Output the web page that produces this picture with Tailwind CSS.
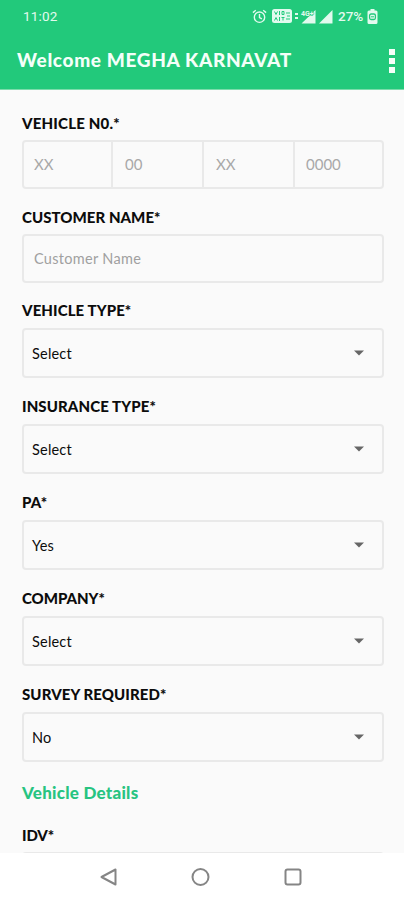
<!DOCTYPE html>
<html lang="en">
<head>
<meta charset="utf-8">
<title>Vehicle form</title>
<script src="https://cdn.jsdelivr.net/npm/@tailwindcss/browser@4"></script>
</head>
<body class="w-[404px] h-[900px] overflow-hidden bg-[#fafafa] font-['Lato',sans-serif] text-[#0c0c0c]">
<div class="flex h-[900px] flex-col">
  <header class="h-[90px] shrink-0 border-b border-[#7bdcab] bg-[#22c97b] text-[#f4fff9]">
    <div class="flex h-8 items-center justify-between pl-[23px] pr-[26px] font-['Roboto',sans-serif] text-[13.500px] text-[#e2faee]">
      <span class="tracking-[0.2px]">11:02</span>
      <div class="flex items-center">
        <svg class="mr-[5px]" width="15" height="15" viewBox="0 0 15 15" fill="none" stroke="currentColor" stroke-width="1.4"><circle cx="7.5" cy="8.2" r="5.2"/><path d="M7.5 5v3.5l2.4 1.4M.9 3.6 3.8 1.2M14.1 3.6l-2.9-2.4"/></svg>
        <svg class="mr-[3px]" width="20" height="14" viewBox="0 0 20 14"><rect width="20" height="14" rx="2.5" fill="currentColor"/><path d="M2.5 2.5 4 5.5l1.5-3M7.5 2v4M10 2.5v3h2v-3zM2.5 11.5 4 8.5l1.5 3M7.5 8v4M9.5 8.5h3M11 8.5v3M14 4h4M15 7h3M14 10h4" fill="none" stroke="#22c97b" stroke-width="1"/></svg>
        <svg class="mr-[3px]" width="21" height="15" viewBox="0 0 21 15" fill="currentColor"><path d="M0 4h3v2H0zM0 8h3v2H0zM20.5 1v13.500H6.500z"/><text x="6" y="6.5" font-family="Roboto" font-size="7" font-weight="700" stroke="#22c97b" stroke-width="1.2" paint-order="stroke">4G+</text></svg>
        <svg class="mr-[5px]" width="14" height="15" viewBox="0 0 14 15" fill="currentColor"><path d="M13.5 1v13.500H0z"/></svg>
        <span class="mr-[3px] w-[26px] whitespace-nowrap font-medium">27%</span>
        <svg width="11" height="15" viewBox="0 0 11 15"><path d="M3.5 0h4v1.5H9q1.5 0 1.5 1.5v10.5q0 1.5-1.5 1.5H2Q.5 15 .5 13.500V3Q.5 1.5 2 1.5h1.5z" fill="currentColor"/><rect x="2.6" y="5" width="5.8" height="5.5" rx="1.5" fill="none" stroke="#22c97b" stroke-width="1.3"/><path d="M4 7.800h3" stroke="#22c97b"/></svg>
      </div>
    </div>
    <div class="flex h-[57px] items-center justify-between pl-[17px] pr-[9px]">
      <h1 class="whitespace-nowrap text-[19px] font-black tracking-[0.65px]">Welcome MEGHA KARNAVAT</h1>
      <div class="flex flex-col gap-[3px]"><i class="size-1.5 bg-current"></i><i class="size-1.5 bg-current"></i><i class="size-1.5 bg-current"></i></div>
    </div>
  </header>

  <main class="flex min-h-0 grow flex-col gap-[19px] overflow-hidden pl-[22px] pr-[20px] pt-[23px] text-[15px]">
    <div class="flex shrink-0 flex-col gap-[7px]">
      <div class="h-5 leading-5 font-black"><span class="tracking-[0.2px]">VEHICLE N0.*</span></div>
      <div class="grid h-[49px] grid-cols-[89px_91px_91px_1fr] divide-x-2 divide-[#e9e9e9] rounded-[4px] border-2 border-[#e9e9e9] text-[#a8a8a8]">
        <div class="flex items-center pl-[10px]"><span>XX</span></div>
        <div class="flex items-center pl-[12px]"><span>00</span></div>
        <div class="flex items-center pl-[12px]"><span>XX</span></div>
        <div class="flex items-center pl-[11px]"><span>0000</span></div>
      </div>
    </div>
    <div class="-mt-px flex shrink-0 flex-col gap-[7px]">
      <div class="h-5 leading-5 font-black"><span class="tracking-[0.05px]">CUSTOMER NAME*</span></div>
      <div class="flex h-[49px] items-center rounded-[4px] border-2 border-[#e9e9e9] pl-[10px] text-[#a0a0a0]"><span class="text-[14.500px] tracking-[0.3px]">Customer Name</span></div>
    </div>
    <div class="-mt-px flex shrink-0 flex-col gap-[7px]">
      <div class="h-5 leading-[19px] font-black"><span class="tracking-[0.1px]">VEHICLE TYPE*</span></div>
      <div class="flex h-[50px] items-center justify-between rounded-[4px] border-2 border-[#e9e9e9] pl-[8px] pr-[18px]"><span class="pt-[2px] text-[14.500px] tracking-[0.2px]">Select</span><svg width="10" height="6" viewBox="0 0 10 6"><path d="M0 .5h10L5 5.500z" fill="#666"/></svg></div>
    </div>
    <div class="flex shrink-0 flex-col gap-[7px]">
      <div class="h-5 leading-[19px] font-black"><span class="tracking-[0.1px]">INSURANCE TYPE*</span></div>
      <div class="flex h-[50px] items-center justify-between rounded-[4px] border-2 border-[#e9e9e9] pl-[8px] pr-[18px]"><span class="pt-[2px] text-[14.500px] tracking-[0.2px]">Select</span><svg width="10" height="6" viewBox="0 0 10 6"><path d="M0 .5h10L5 5.500z" fill="#666"/></svg></div>
    </div>
    <div class="flex shrink-0 flex-col gap-[7px]">
      <div class="h-5 leading-[19px] font-black"><span class="tracking-[0.2px]">PA*</span></div>
      <div class="flex h-[50px] items-center justify-between rounded-[4px] border-2 border-[#e9e9e9] pl-[8px] pr-[18px]"><span class="pt-[2px] text-[14.500px] tracking-[0.2px]">Yes</span><svg width="10" height="6" viewBox="0 0 10 6"><path d="M0 .5h10L5 5.500z" fill="#666"/></svg></div>
    </div>
    <div class="flex shrink-0 flex-col gap-[7px]">
      <div class="h-5 leading-[19px] font-black"><span class="-tracking-[0.05px]">COMPANY*</span></div>
      <div class="flex h-[50px] items-center justify-between rounded-[4px] border-2 border-[#e9e9e9] pl-[8px] pr-[18px]"><span class="pt-[2px] text-[14.500px] tracking-[0.2px]">Select</span><svg width="10" height="6" viewBox="0 0 10 6"><path d="M0 .5h10L5 5.500z" fill="#666"/></svg></div>
    </div>
    <div class="flex shrink-0 flex-col gap-[7px]">
      <div class="h-5 leading-[19px] font-black"><span class="tracking-[0.1px]">SURVEY REQUIRED*</span></div>
      <div class="flex h-[50px] items-center justify-between rounded-[4px] border-2 border-[#e9e9e9] pl-[8px] pr-[18px]"><span class="pt-[2px] text-[14.500px] tracking-[0.2px]">No</span><svg width="10" height="6" viewBox="0 0 10 6"><path d="M0 .5h10L5 5.500z" fill="#666"/></svg></div>
    </div>
    <h2 class="mt-[2px] h-5 shrink-0 text-[17px] leading-5 font-black tracking-[0.25px] text-[#27c481]">Vehicle Details</h2>
    <div class="mt-[3px] flex shrink-0 flex-col gap-[7px]">
      <div class="h-5 leading-5 font-black"><span class="-tracking-[0.1px]">IDV*</span></div>
      <div class="h-[49px] rounded-[4px] border-2 border-[#e9e9e9]"></div>
    </div>
  </main>

  <nav class="flex h-[47px] shrink-0 items-center justify-between bg-white pl-[99px] pr-[102px]">
    <svg width="19" height="20" viewBox="0 0 19 20" fill="none" stroke="#858585" stroke-width="2" stroke-linejoin="round"><path d="M16.500 2.500v15L2.500 10z"/></svg>
    <svg width="20" height="20" viewBox="0 0 20 20" fill="none" stroke="#858585" stroke-width="2"><circle cx="9.500" cy="10" r="8"/></svg>
    <svg width="18" height="18" viewBox="0 0 18 18" fill="none" stroke="#858585" stroke-width="2"><rect x="1.500" y="1.500" width="15" height="15" rx="2"/></svg>
  </nav>
</div>
</body>
</html>
